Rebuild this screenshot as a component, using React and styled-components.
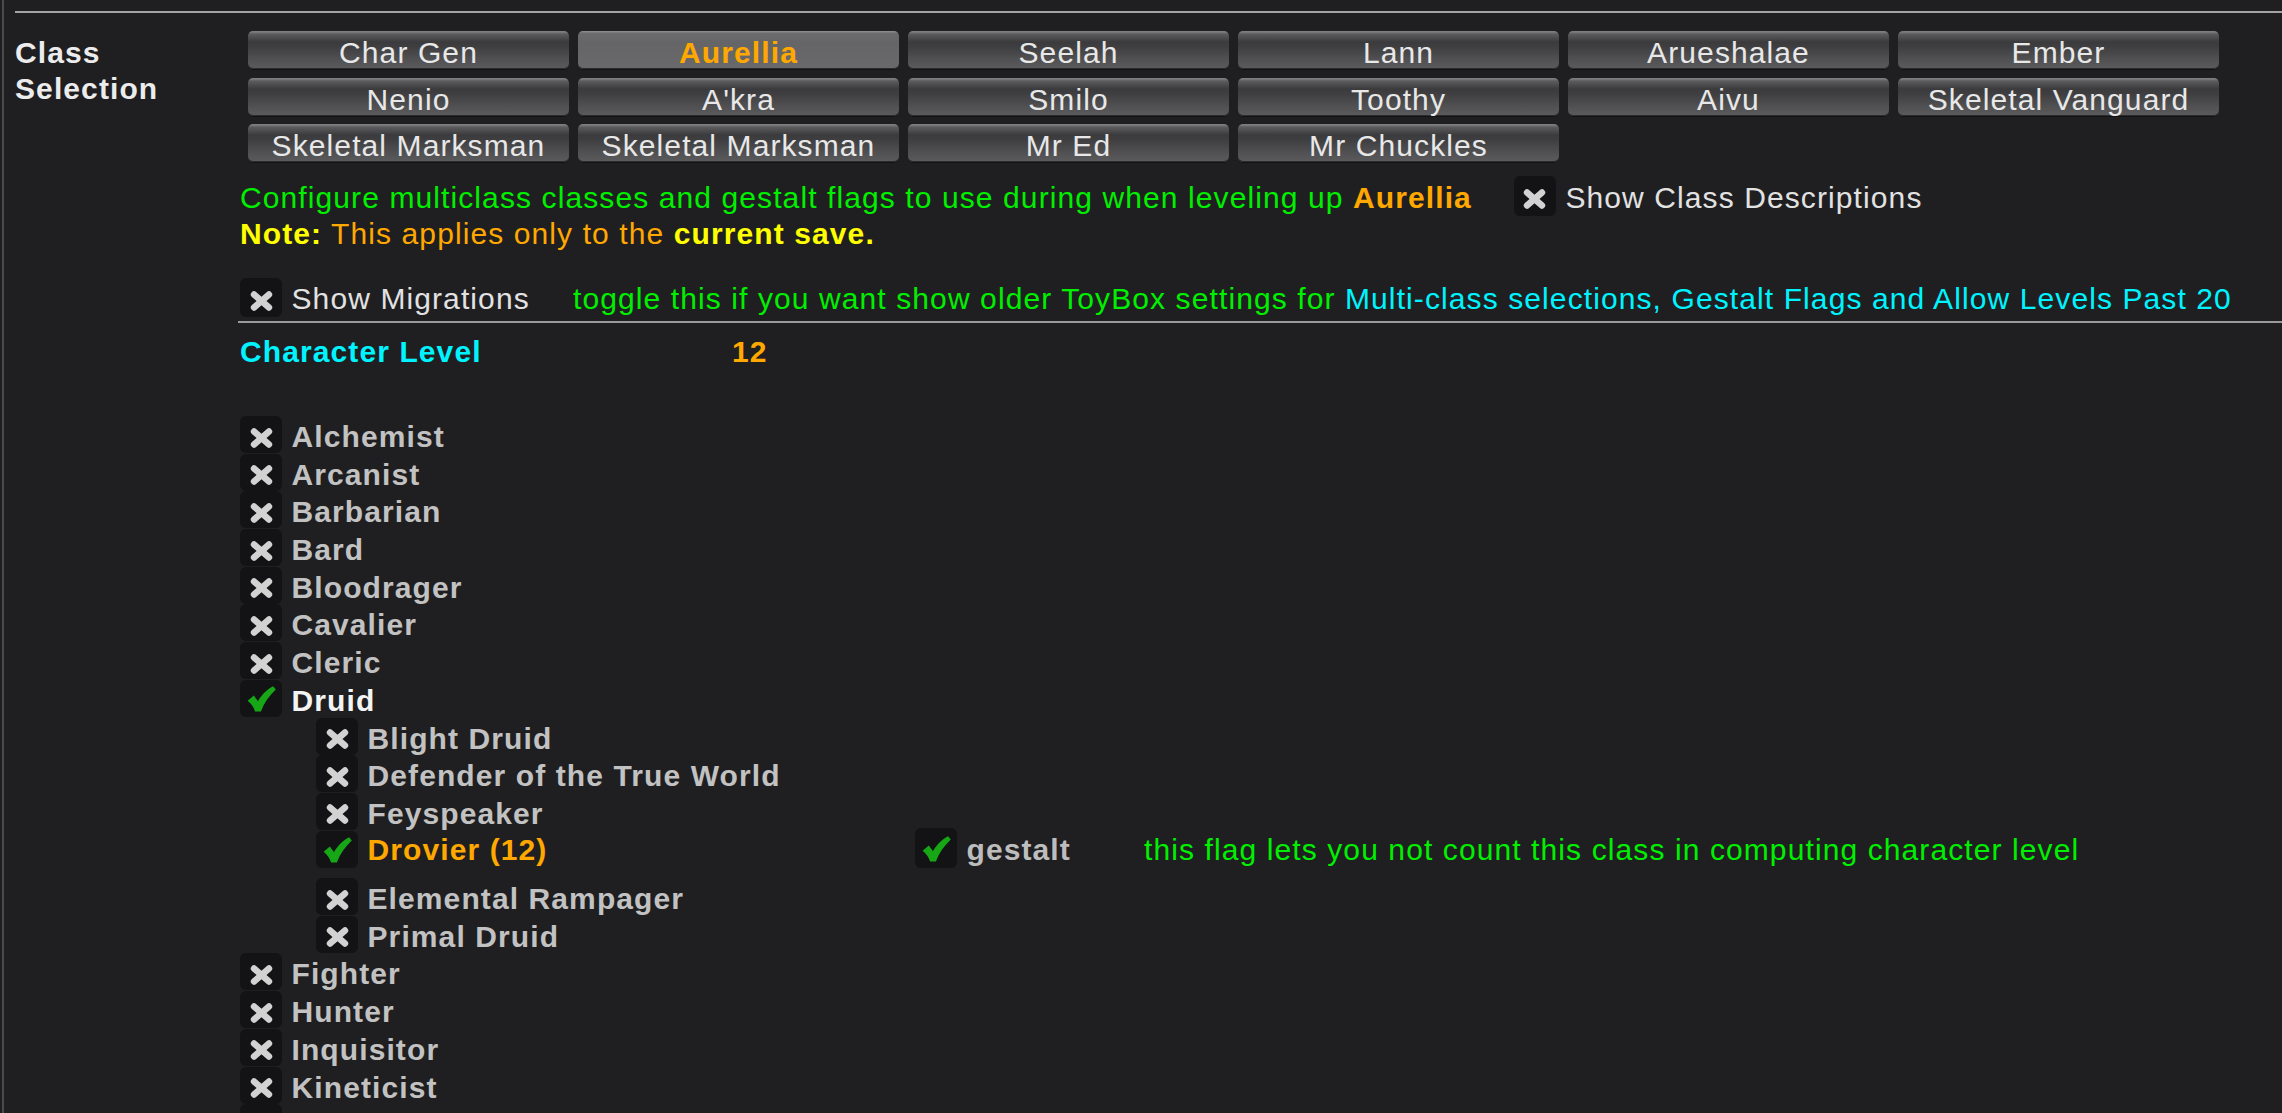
import React from "react";
import styled, { createGlobalStyle } from "styled-components";

const GlobalStyle = createGlobalStyle`
  html, body {
    margin: 0;
    padding: 0;
    background: #1f1f21;
    overflow: hidden;
  }
  body {
    font-family: "Liberation Sans", Arial, Helvetica, sans-serif;
    font-size: 30px;
    letter-spacing: 1.1px;
    color: #e4e4e4;
  }
`;

const Page = styled.div`
  min-height: 100vh;
  box-sizing: border-box;
  margin-left: 2px;
  border-left: 2px solid #4a4a4c;
  padding: 11px 0 0 11px;
`;

const TopRule = styled.div`
  height: 2px;
  background: #a3a3a3;
`;

const Section = styled.div`
  display: flex;
  margin-top: 18px;
`;

const SectionLabel = styled.div`
  width: 225px;
  flex-shrink: 0;
  font-weight: 700;
  line-height: 36px;
  padding-top: 4px;
  color: #ececec;
`;

const Body = styled.div`
  flex: 1;
  min-width: 0;
  display: flex;
  flex-direction: column;
`;

const ButtonGrid = styled.div`
  display: grid;
  grid-template-columns: repeat(6, 321px);
  column-gap: 9px;
  row-gap: 8.5px;
  margin-left: 8px;
`;

const ClassButton = styled.button`
  height: 38px;
  box-sizing: border-box;
  border: none;
  border-radius: 5px;
  padding: 6px 0 0;
  font-family: inherit;
  font-size: 30px;
  letter-spacing: 1.1px;
  line-height: 32px;
  text-align: center;
  white-space: nowrap;
  overflow: hidden;
  cursor: pointer;
  font-weight: ${(p) => (p.$active ? 700 : 400)};
  color: ${(p) => (p.$active ? "#ffa800" : "#e8e8e8")};
  background: ${(p) =>
    p.$active
      ? "linear-gradient(#8a8a8c 0, #8a8a8c 1px, #6c6c6e 2px, #656567 12px, #69696b 100%)"
      : "linear-gradient(#7e7e80 0, #7e7e80 1px, #5c5c5e 3px, #3b3b3d 11px, #3f3f41 16px, #505052 28px, #5a5a5c 37px)"};
  box-shadow: 0 1px 0 #121212, inset 0 -1px 0 #2c2c2e;
`;

const InfoLine = styled.div`
  display: flex;
  align-items: flex-start;
  height: 40px;
  margin-top: 14px;
`;

const InfoText = styled.div`
  line-height: 36px;
  padding-top: 4px;
  white-space: nowrap;
`;

const NoteLine = styled.div`
  line-height: 35px;
  white-space: nowrap;
`;

const Tint = styled.span`
  color: ${(p) => p.$c};
  font-weight: ${(p) => (p.$bold ? 700 : 400)};
`;

const CheckBox = styled.span`
  display: flex;
  align-items: center;
  justify-content: center;
  flex-shrink: 0;
  box-sizing: border-box;
  width: 42px;
  height: ${(p) => p.$h || 37}px;
  margin-top: ${(p) => p.$mt || 0}px;
  margin-left: ${(p) => p.$ml || 0}px;
  padding-top: ${(p) => (p.$checked ? 2 : 6)}px;
  border-radius: 6px;
  background: #131315;
`;

const ToggleLabel = styled.span`
  margin-left: 9.5px;
  line-height: 34px;
  padding-top: ${(p) => p.$pt ?? 4}px;
  white-space: nowrap;
  color: #e2e2e2;
`;

const MigrationsRow = styled.div`
  display: flex;
  align-items: flex-start;
  height: 39px;
  margin-top: 27px;
`;

const FixedToggle = styled.div`
  display: flex;
  align-items: flex-start;
  flex-shrink: 0;
  width: ${(p) => p.$w}px;
`;

const Hint = styled.span`
  line-height: 34px;
  padding-top: ${(p) => p.$pt ?? 4}px;
  white-space: nowrap;
  color: #00f000;
`;

const Divider = styled.div`
  height: 2px;
  background: #9a9a9a;
  margin: 4px 0 0 -2px;
`;

const LevelRow = styled.div`
  display: flex;
  margin-top: 10.5px;
  line-height: 36px;
  font-weight: 700;
`;

const LevelLabel = styled.span`
  width: 492px;
  color: #00f4ff;
`;

const LevelValue = styled.span`
  color: #ffa800;
`;

const ClassList = styled.div`
  display: flex;
  flex-direction: column;
  margin-top: 46.5px;
`;

const ClassRow = styled.div`
  display: flex;
  align-items: flex-start;
  flex-shrink: 0;
  height: ${(p) => (p.$tall ? 47.5 : 37.7)}px;
  padding-left: ${(p) => (p.$indent ? 76 : 0)}px;
`;

const ClassName = styled.span`
  margin-left: 9.5px;
  font-weight: 700;
  line-height: 34px;
  padding-top: ${(p) => p.$pt ?? 4}px;
  white-space: nowrap;
  color: ${(p) => p.$c};
`;

const XMark = () => (
  <svg width="23" height="20" viewBox="0 0 23 20" aria-hidden="true">
    <g stroke="#d2d2d2" strokeWidth="6.4" strokeLinecap="round">
      <line x1="4" y1="3.5" x2="19" y2="16.5" />
      <line x1="19" y1="3.5" x2="4" y2="16.5" />
    </g>
  </svg>
);

const CheckMark = () => (
  <svg width="29" height="26" viewBox="0 0 28 25" aria-hidden="true">
    <path
      d="M0.6 14.2 L6.6 9.2 L10.6 14.6 C14 8.6 19.2 3.2 25.2 0.2 L27.8 3.4 C21.8 9 16.6 16 13.4 24.6 L7.8 24.6 C6.4 20.2 4 16.8 0.6 14.2 Z"
      fill="#16a616"
    />
  </svg>
);

const Toggle = ({ checked, h, mt, ml }) => (
  <CheckBox $checked={checked} $h={h} $mt={mt} $ml={ml}>
    {checked ? <CheckMark /> : <XMark />}
  </CheckBox>
);

const buttons = [
  "Char Gen",
  "Aurellia",
  "Seelah",
  "Lann",
  "Arueshalae",
  "Ember",
  "Nenio",
  "A'kra",
  "Smilo",
  "Toothy",
  "Aivu",
  "Skeletal Vanguard",
  "Skeletal Marksman",
  "Skeletal Marksman",
  "Mr Ed",
  "Mr Chuckles",
];

const classes = [
  { name: "Alchemist" },
  { name: "Arcanist" },
  { name: "Barbarian" },
  { name: "Bard" },
  { name: "Bloodrager" },
  { name: "Cavalier" },
  { name: "Cleric" },
  {
    name: "Druid",
    checked: true,
    archetypes: [
      { name: "Blight Druid" },
      { name: "Defender of the True World" },
      { name: "Feyspeaker" },
      { name: "Drovier (12)", checked: true, gestalt: true },
      { name: "Elemental Rampager" },
      { name: "Primal Druid" },
    ],
  },
  { name: "Fighter" },
  { name: "Hunter" },
  { name: "Inquisitor" },
  { name: "Kineticist" },
  { name: "Magus" },
  { name: "Monk" },
];

const GREY = "#c2c2c2";

const ArchetypeRow = ({ a }) => {
  const color = a.checked ? "#ffa800" : GREY;
  if (a.gestalt) {
    return (
      <ClassRow $indent $tall>
        <FixedToggle $w={599}>
          <Toggle checked={a.checked} />
          <ClassName $c={color} $pt={2}>{a.name}</ClassName>
        </FixedToggle>
        <FixedToggle $w={229}>
          <Toggle checked h={40} mt={-3} />
          <ClassName $c="#bdbdbd" $pt={2}>gestalt</ClassName>
        </FixedToggle>
        <Hint $pt={2}>this flag lets you not count this class in computing character level</Hint>
      </ClassRow>
    );
  }
  return (
    <ClassRow $indent>
      <Toggle checked={a.checked} />
      <ClassName $c={color}>{a.name}</ClassName>
    </ClassRow>
  );
};

export default function App() {
  return (
    <>
      <GlobalStyle />
      <Page>
        <TopRule />
        <Section>
          <SectionLabel>
            Class
            <br />
            Selection
          </SectionLabel>
          <Body>
            <ButtonGrid>
              {buttons.map((b, i) => (
                <ClassButton key={i} $active={b === "Aurellia"}>
                  {b}
                </ClassButton>
              ))}
            </ButtonGrid>

            <InfoLine>
              <InfoText>
                <Tint $c="#00f000">
                  Configure multiclass classes and gestalt flags to use during when leveling up{" "}
                </Tint>
                <Tint $c="#ffa800" $bold>
                  Aurellia
                </Tint>
              </InfoText>
              <Toggle h={40} ml={42} />
              <ToggleLabel $pt={5}>Show Class Descriptions</ToggleLabel>
            </InfoLine>
            <NoteLine>
              <Tint $c="#ffff00" $bold>
                Note:
              </Tint>{" "}
              <Tint $c="#ffa800">This applies only to the</Tint>{" "}
              <Tint $c="#ffff00" $bold>
                current save.
              </Tint>
            </NoteLine>

            <MigrationsRow>
              <FixedToggle $w={333}>
                <Toggle h={39} />
                <ToggleLabel $pt={3.5}>Show Migrations</ToggleLabel>
              </FixedToggle>
              <Hint $pt={3.5}>
                toggle this if you want show older ToyBox settings for{" "}
                <Tint $c="#00f4ff">
                  Multi-class selections, Gestalt Flags and Allow Levels Past 20
                </Tint>
              </Hint>
            </MigrationsRow>
            <Divider />

            <LevelRow>
              <LevelLabel>Character Level</LevelLabel>
              <LevelValue>12</LevelValue>
            </LevelRow>

            <ClassList>
              {classes.map((c) => (
                <React.Fragment key={c.name}>
                  <ClassRow>
                    <Toggle checked={c.checked} />
                    <ClassName $c={c.checked ? "#f4f4f4" : GREY}>{c.name}</ClassName>
                  </ClassRow>
                  {c.archetypes &&
                    c.archetypes.map((a) => <ArchetypeRow key={a.name} a={a} />)}
                </React.Fragment>
              ))}
            </ClassList>
          </Body>
        </Section>
      </Page>
    </>
  );
}
